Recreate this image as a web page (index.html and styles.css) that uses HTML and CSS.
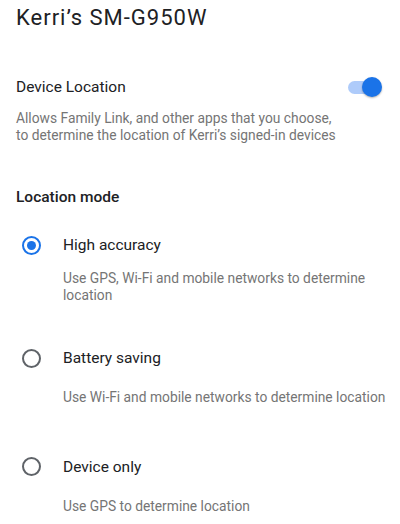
FILE: index.html
```html
<!DOCTYPE html>
<html>
<head>
<meta charset="utf-8">
<link rel="stylesheet" href="styles.css">
</head>
<body>
<div class="page">
  <h1 class="title">Kerri’s SM-G950W</h1>

  <div class="setting">
    <span class="setting-label">Device Location</span>
    <span class="toggle"><span class="toggle-track"></span><span class="toggle-thumb"></span></span>
  </div>
  <p class="setting-desc">Allows Family Link, and other apps that you choose, to determine the location of Kerri’s signed-in devices</p>

  <h2 class="section-title">Location mode</h2>

  <div class="option option-first">
    <div class="option-row">
      <span class="radio radio-on"><span class="radio-dot"></span></span>
      <span class="option-label">High accuracy</span>
    </div>
    <p class="option-desc option-desc-multi">Use GPS, Wi-Fi and mobile networks to determine location</p>
  </div>

  <div class="option option-second">
    <div class="option-row">
      <span class="radio"></span>
      <span class="option-label">Battery saving</span>
    </div>
    <p class="option-desc">Use Wi-Fi and mobile networks to determine location</p>
  </div>

  <div class="option option-third">
    <div class="option-row">
      <span class="radio"></span>
      <span class="option-label">Device only</span>
    </div>
    <p class="option-desc">Use GPS to determine location</p>
  </div>
</div>
</body>
</html>
```

FILE: styles.css
```css
html, body {
  margin: 0;
  padding: 0;
  background: #ffffff;
}

.page {
  font-family: Roboto, "Noto Sans", "Liberation Sans", sans-serif;
  color: #202124;
  padding: 4px 6px 0 16px;
}

.title {
  margin: 0;
  font-size: 22px;
  line-height: 28px;
  font-weight: 400;
  letter-spacing: 1px;
}

.setting {
  display: flex;
  align-items: center;
  justify-content: space-between;
  height: 40px;
  margin-top: 35px;
  padding-right: 12px;
}

.setting-label {
  font-size: 15.5px;
  line-height: 20px;
}

.toggle {
  position: relative;
  width: 34px;
  height: 20px;
  display: block;
}

.toggle-track {
  position: absolute;
  left: 0;
  top: 4px;
  width: 28px;
  height: 13px;
  border-radius: 7px;
  background: #aecbfa;
}

.toggle-thumb {
  position: absolute;
  right: 0;
  top: 0;
  width: 20px;
  height: 20px;
  border-radius: 50%;
  background: #1a73e8;
  box-shadow: 0 1px 2px rgba(0, 0, 0, 0.3);
}

.setting-desc {
  margin: 3px 0 0 0;
  font-size: 13.8px;
  line-height: 16.5px;
  color: #757575;
  padding-right: 58px;
}

.section-title {
  margin: 44px 0 0 0;
  font-size: 15.5px;
  line-height: 20px;
  font-weight: 500;
}

.option-first {
  margin-top: 28px;
}

.option-second {
  margin-top: 45px;
}

.option-third {
  margin-top: 51px;
}

.option-row {
  display: flex;
  align-items: center;
  height: 20px;
}

.radio {
  box-sizing: border-box;
  width: 19px;
  height: 19px;
  border-radius: 50%;
  border: 2px solid #5f6368;
  margin-left: 6px;
  margin-right: 22px;
  display: flex;
  align-items: center;
  justify-content: center;
  flex: none;
}

.radio-on {
  border-color: #1a73e8;
}

.radio-dot {
  width: 9px;
  height: 9px;
  border-radius: 50%;
  background: #1a73e8;
}

.option-label {
  font-size: 15.5px;
  line-height: 20px;
}

.option-desc {
  margin: 21px 0 0 47px;
  font-size: 13.8px;
  line-height: 16.5px;
  color: #757575;
}

.option-desc-multi {
  margin-top: 15px;
}
```
